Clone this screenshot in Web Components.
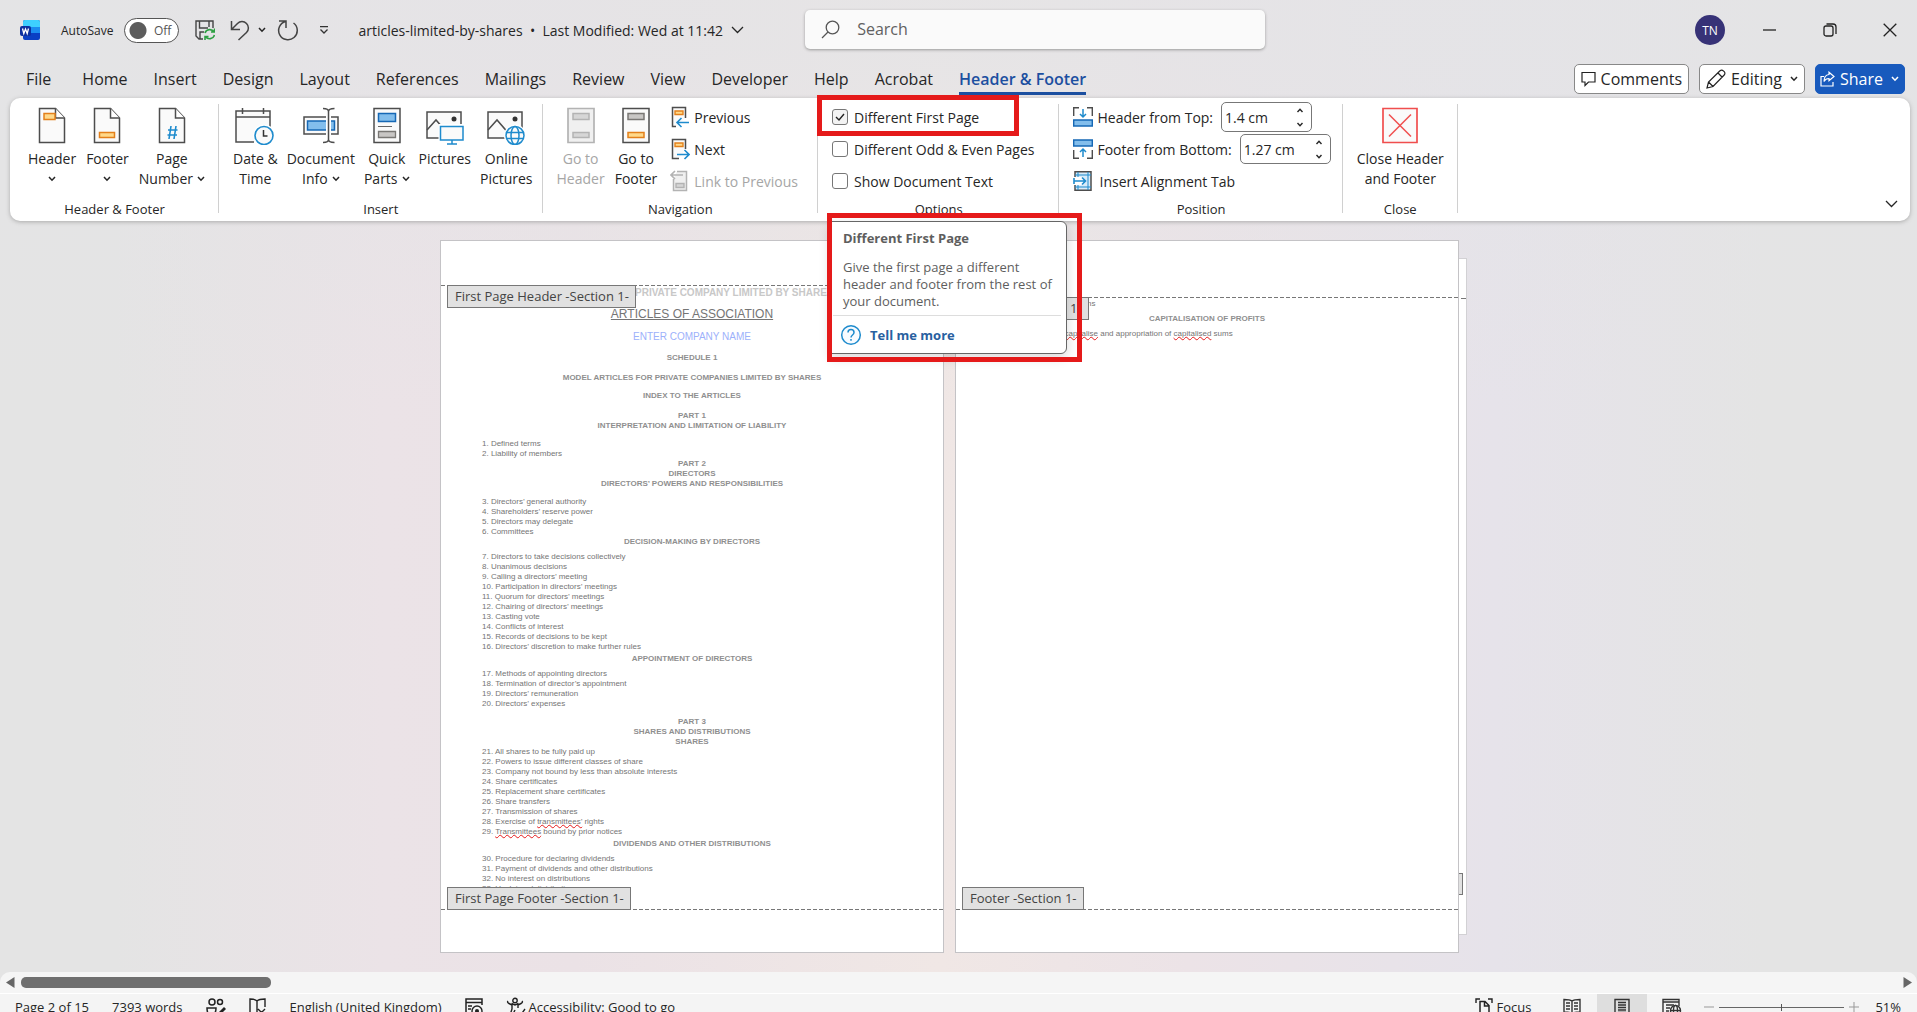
<!DOCTYPE html>
<html lang="en">
<head>
<meta charset="utf-8">
<title>articles-limited-by-shares</title>
<style>
    html, body { height: 100%; margin: 0; }
    body {
        font-family: "Open Sans", "Noto Sans", sans-serif;
        font-size: 14px;
        color: #262626;
        overflow: hidden;
        --blue: #185abd;
        --line: #d0d0d0;
        --red: #e51a1a;
    }
</style>
</head>
<body>
<word-app>
    <title-bar slot="title"></title-bar>
    <tab-strip slot="tabs"></tab-strip>
    <ribbon-bar slot="ribbon">
        <ribbon-group label="Header &amp; Footer" style="--pad: 0 10px 0 14px; --gap: 2px">
            <ribbon-button icon="header" label="Header|" drop></ribbon-button>
            <ribbon-button icon="footer" label="Footer|" drop></ribbon-button>
            <ribbon-button icon="number" label="Page|Number" drop></ribbon-button>
        </ribbon-group>
        <ribbon-group label="Insert" style="--pad: 0 6px 0 10px">
            <ribbon-button icon="date" label="Date &amp;|Time"></ribbon-button>
            <ribbon-button icon="info" label="Document|Info" drop></ribbon-button>
            <ribbon-button icon="parts" label="Quick|Parts" drop></ribbon-button>
            <ribbon-button icon="pictures" label="Pictures"></ribbon-button>
            <ribbon-button icon="online" label="Online|Pictures"></ribbon-button>
        </ribbon-group>
        <ribbon-group label="Navigation" style="--pad: 0 20px 0 10px; --gap: 2px">
            <ribbon-button icon="gotoHeader" label="Go to|Header" disabled></ribbon-button>
            <ribbon-button icon="gotoFooter" label="Go to|Footer"></ribbon-button>
            <ribbon-stack>
                <ribbon-command icon="previous" label="Previous"></ribbon-command>
                <ribbon-command icon="next" label="Next"></ribbon-command>
                <ribbon-command icon="link" label="Link to Previous" disabled></ribbon-command>
            </ribbon-stack>
        </ribbon-group>
        <ribbon-group label="Options" style="--pad: 0 25px 0 14px">
            <ribbon-stack>
                <ribbon-check label="Different First Page" checked></ribbon-check>
                <ribbon-check label="Different Odd &amp; Even Pages"></ribbon-check>
                <ribbon-check label="Show Document Text"></ribbon-check>
            </ribbon-stack>
            <feature-tip slot="over" heading="Different First Page">Give the first page a different<br>header and footer from the rest of<br>your document.</feature-tip>
            <highlight-frame slot="over" style="left: -1px; top: -3px; width: 202px; height: 41px"></highlight-frame>
            <highlight-frame slot="over" style="left: 9px; top: 115px; width: 255px; height: 149px"></highlight-frame>
        </ribbon-group>
        <ribbon-group label="Position" style="--pad: 0 12px 0 14px">
            <ribbon-stack>
                <ribbon-measure icon="fromTop" label="Header from Top:" value="1.4 cm"></ribbon-measure>
                <ribbon-measure icon="fromBottom" label="Footer from Bottom:" value="1.27 cm"></ribbon-measure>
                <ribbon-command icon="alignTab" label="Insert Alignment Tab"></ribbon-command>
            </ribbon-stack>
        </ribbon-group>
        <ribbon-group label="Close" style="--pad: 0 10px">
            <ribbon-button icon="close" label="Close Header|and Footer"></ribbon-button>
        </ribbon-group>
    </ribbon-bar>
    <doc-workspace slot="workspace">
        <doc-sheet header="First Page Header -Section 1-" footer="First Page Footer -Section 1-" headline="PRIVATE COMPANY LIMITED BY SHARES">
            <articles-index></articles-index>
        </doc-sheet>
        <doc-sheet class="second" header="Header -Section 1-" footer="Footer -Section 1-">
            <profits-index></profits-index>
        </doc-sheet>
        <sheet-edge></sheet-edge>
    </doc-workspace>
    <scroll-strip slot="scroll"></scroll-strip>
    <status-bar slot="status"></status-bar>
</word-app>

<script>
const ink = '#4d4d4d';
const blue = '#1e8bcd';
const page = `<path d="M1.5 1.500h16l9 9.500v24.500h-25z" fill="#fafafa" stroke="${ink}" stroke-width="1.500"/><path d="M17.500 1.500v9.500h9" fill="#fff" stroke="${ink}" stroke-width="1.500"/>`;
const picture = `<path d="M1 5h34v26H1z" fill="#fafafa" stroke="${ink}" stroke-width="1.500"/><path d="M1 23l9-10 13 15" fill="none" stroke="${ink}" stroke-width="1.500"/><circle cx="28" cy="12" r="2.500" fill="#333"/>`;

// name: [width, height, markup]
const ICONS = {
    word: [20, 20, `<rect x="3" width="17" height="20" rx="2" fill="#0a3fc4"/><path d="M3 7V2a2 2 0 0 1 2-2h13a2 2 0 0 1 2 2v5z" fill="#3ed0ff"/><path d="M7 7h13v6H7z" fill="#1b8cf0"/><rect y="6" width="11" height="10" rx="2" fill="#0b2f9f"/><path d="M2.500 8.500l1.300 5 1.700-4.500 1.700 4.500 1.300-5" fill="none" stroke="#fff" stroke-width="1.300"/>`],
    save: [20, 21, `<path d="M8 19H4l-3-3V1h17v7M4.500 1v7H13M14 1v6M5 19v-7h4" fill="none" stroke="#444" stroke-width="1.400"/><path d="M10 13a5 5 0 0 1 9-1M19.500 8.500V12H16M19.500 15a5 5 0 0 1-9 1.500M10 20v-3.500h3.500" fill="none" stroke="#2ea043" stroke-width="1.600"/>`],
    undo: [20, 21, `<path d="M1.500 1v8.500H10M2 9l5.500-5.500a6.300 6.300 0 0 1 9 0 6.300 6.300 0 0 1 0 9L8.500 20" fill="none" stroke="#444" stroke-width="1.500"/>`],
    redo: [22, 21, `<path d="M2 1h7v7M8.500 1.500a9.300 9.300 0 1 0 8 1.500" fill="none" stroke="#444" stroke-width="1.500"/>`],
    chevron: [8, 6, `<path d="M1 1l3 3.200L7 1" fill="none" stroke="currentColor" stroke-width="1.500"/>`],
    chevronUp: [8, 5, `<path d="M1.500 4L4 1.300 6.500 4" fill="none" stroke="currentColor" stroke-width="1.400"/>`],
    chevronSmall: [8, 5, `<path d="M1.500 1L4 3.700 6.500 1" fill="none" stroke="currentColor" stroke-width="1.400"/>`],
    chevronWide: [13, 8, `<path d="M1 1l5.500 5.500L12 1" fill="none" stroke="currentColor" stroke-width="1.300"/>`],
    customise: [10, 8, `<path d="M1 .7h8M1.500 3.500L5 7l3.500-3.500" fill="none" stroke="#333" stroke-width="1.300"/>`],
    search: [19, 19, `<circle cx="11.500" cy="7.500" r="6.300" fill="none" stroke="#555" stroke-width="1.300"/><path d="M7 12l-6 6" stroke="#555" stroke-width="1.300"/>`],
    minimise: [14, 14, `<path d="M0 7h13" stroke="#222" stroke-width="1.300"/>`],
    restore: [14, 14, `<rect x="1" y="3" width="9" height="10" rx="2" fill="none" stroke="#222" stroke-width="1.300"/><path d="M3.500 1H10a3 3 0 0 1 3 3v7" fill="none" stroke="#222" stroke-width="1.300"/>`],
    exit: [14, 14, `<path d="M.7.7l12.600 12.600M13.300.7L.7 13.300" stroke="#222" stroke-width="1.300"/>`],
    comment: [15, 16, `<path d="M1 1.500h13v9.500H7.500L4 14.500V11H1z" fill="none" stroke="#222" stroke-width="1.200"/>`],
    pencil: [20, 20, `<path d="M1 19l1.500-6L14 1.800a2.300 2.300 0 0 1 3.300 0l.9.9a2.300 2.300 0 0 1 0 3.300L7 17.500zM12 4l4 4M2.500 13L7 17.500" fill="none" stroke="#222" stroke-width="1.200"/>`],
    share: [15, 16, `<path d="M4 5.500H1V15h12v-4" fill="none" stroke="#fff" stroke-width="1.200"/><path d="M9 1.200l5 4.300-5 4.300V7.500C6.500 7.500 5 8.500 4 10.500c0-4 2-6.700 5-7z" fill="none" stroke="#fff" stroke-width="1.200"/>`],
    header: [28, 38, `${page}<path d="M6 6.500h11v6H6z" fill="#ffd98a" stroke="#e3801b" stroke-width="1.500"/>`],
    footer: [28, 38, `${page}<path d="M6.500 25.500h15v5h-15z" fill="#ffd98a" stroke="#e3801b" stroke-width="1.500"/>`],
    number: [28, 38, `${page}<path d="M13 19l-2 13M18 19l-2 13M10 23h9.500M9.500 28H19" fill="none" stroke="${blue}" stroke-width="1.600"/>`],
    date: [40, 38, `<path d="M1 4h34v31H1z" fill="#fafafa"/><path d="M19 35H1V4h34v17M1 10h34M7.500 1v6M28.500 1v6" fill="none" stroke="${ink}" stroke-width="1.500"/><circle cx="29" cy="28.500" r="11" fill="#fff"/><circle cx="29" cy="28.500" r="9" fill="#fafafa" stroke="${blue}" stroke-width="1.600"/><path d="M28.500 23v6h4" fill="none" stroke="#333" stroke-width="1.500"/>`],
    info: [36, 38, `<path d="M1 10h34v17H1z" fill="#fafafa" stroke="${ink}" stroke-width="1.500"/><path d="M4.500 14h27v9h-27z" fill="#83beec" stroke="#1668b5" stroke-width="1.500"/><path d="M25.500 1v35" stroke="#fff" stroke-width="5"/><path d="M20 1.500c3 0 5.500 1 5.500 3 0-2 2.500-3 6-3M20 35.500c3 0 5.500-1 5.500-3 0 2 2.500 3 6 3M25.500 4v30" fill="none" stroke="${ink}" stroke-width="1.500"/>`],
    parts: [28, 38, `<path d="M1 1.500h26v34H1z" fill="#fafafa" stroke="${ink}" stroke-width="1.500"/><path d="M5.500 6.500h17v8h-17z" fill="#83beec" stroke="#1668b5" stroke-width="1.500"/><path d="M5 19.500h14" stroke="#666"/><path d="M5.500 24.500h17v6h-17z" fill="#c8c6c4" stroke="#797774" stroke-width="1.300"/>`],
    pictures: [38, 38, `${picture}<path d="M12.500 17h26v18h-26z" fill="#fff"/><path d="M14.500 19.500h22.500V33H14.500zM26 33v3.500M21 37h10" fill="#fafafa" stroke="${blue}" stroke-width="1.500"/>`],
    online: [38, 38, `${picture}<circle cx="28" cy="28.500" r="11" fill="#fff"/><g fill="none" stroke="${blue}" stroke-width="1.500"><circle cx="28" cy="28.500" r="9" fill="#fafafa"/><ellipse cx="28" cy="28.500" rx="4" ry="9"/><path d="M20 25.500h16M20 31.500h16"/></g>`],
    gotoHeader: [28, 38, `<path d="M1 1.500h26v34H1z" fill="#f0f0f0" stroke="#b3b3b3" stroke-width="1.700"/><path d="M6 6.500h16v6H6zM6 25.500h16v5H6z" fill="#d6d6d6" stroke="#b3b3b3" stroke-width="1.500"/>`],
    gotoFooter: [28, 38, `<path d="M1 1.500h26v34H1z" fill="#fafafa" stroke="${ink}" stroke-width="1.500"/><path d="M6 6.500h16v6H6z" fill="#c8c6c4" stroke="#797774" stroke-width="1.500"/><path d="M6 25.500h16v5H6z" fill="#ffd98a" stroke="#e3801b" stroke-width="1.500"/>`],
    close: [36, 38, `<path d="M1 1.500h34v34H1z" fill="#fafafa" stroke="#f04e4e" stroke-width="1.700"/><path d="M7 7.500l22 22M29 7.500l-22 22" stroke="#f04e4e" stroke-width="1.500"/>`],
    previous: [20, 22, `<path d="M15.500 12V1.500h-13v19H6" fill="#fafafa" stroke="${ink}" stroke-width="1.500"/><path d="M5 5h8v3.500H5z" fill="#ffd98a" stroke="#e3801b" stroke-width="1.400"/><path d="M19 16.500H7M11.500 12L7 16.500l4.500 4.500" fill="none" stroke="${blue}" stroke-width="1.600"/>`],
    next: [20, 22, `<path d="M15.500 11V1.500h-13v19H9" fill="#fafafa" stroke="${ink}" stroke-width="1.500"/><path d="M5 5h8v3.500H5z" fill="#ffd98a" stroke="#e3801b" stroke-width="1.400"/><path d="M7 16.500h12M14.500 12l4.500 4.500-4.500 4.500" fill="none" stroke="${blue}" stroke-width="1.600"/>`],
    link: [20, 22, `<path d="M7 1.500h9.500v19h-13V9" fill="#f0f0f0" stroke="#b3b3b3" stroke-width="1.500"/><path d="M6 13.500h8v4H6z" fill="#d6d6d6" stroke="#b3b3b3" stroke-width="1.400"/><path d="M1 5h12M5 1L1 5l4 4" fill="none" stroke="#b3b3b3" stroke-width="1.600"/>`],
    fromTop: [20, 20, `<path d="M.7 9V.7H6M14 .7h5.300V9" fill="none" stroke="${ink}" stroke-width="1.400"/><path d="M.7 13h18.600v6H.7z" fill="#83beec" stroke="#1668b5" stroke-width="1.400"/><path d="M10 2v8M7 7l3 3 3-3" fill="none" stroke="${blue}" stroke-width="1.500"/>`],
    fromBottom: [20, 20, `<path d="M.7 11v8.300H6M14 19.300h5.300V11" fill="none" stroke="${ink}" stroke-width="1.400"/><path d="M.7 1h18.600v6H.7z" fill="#83beec" stroke="#1668b5" stroke-width="1.400"/><path d="M10 18v-8M7 13l3-3 3 3" fill="none" stroke="${blue}" stroke-width="1.500"/>`],
    alignTab: [20, 20, `<path d="M2 .7h16v18.600H2z" fill="#d8ecfa" stroke="${ink}" stroke-width="1.500"/><path d="M5 1v18M15 1v18M2 4h16M2 16h16" stroke="${blue}"/><path d="M0 6h10v8H0z" fill="#fff"/><path d="M1 10h11M9 6.500l3.500 3.500L9 13.500M1 7v6" fill="none" stroke="${blue}" stroke-width="1.600"/>`],
    help: [22, 22, `<circle cx="11" cy="11" r="9.300" fill="#f7fbff" stroke="${blue}" stroke-width="1.500"/><path d="M8 8.500c0-4 6-4 6 0 0 2.500-3 2.500-3 5M11 15v1.800" fill="none" stroke="${blue}" stroke-width="1.500"/>`],
    people: [20, 20, `<g fill="none" stroke="#222" stroke-width="1.500"><circle cx="6" cy="5" r="3"/><circle cx="14" cy="5" r="2.500"/><path d="M1 11h9c0 5-2 7-5 7s-4-3-4-7z"/></g><path d="M11 17l7-7 2 2-7 7h-2z" fill="#222"/>`],
    proof: [18, 20, `<path d="M8 17V4C6 2 4 2 1 2v15h5M8 4c2-2 4-2 8-2v8M9 12l7 7M16 12l-7 7" fill="none" stroke="#222" stroke-width="1.400"/>`],
    macro: [18, 20, `<path d="M6 17H1V2h16v6M1 5.500h16M3 9h4M3 12h3" fill="none" stroke="#222" stroke-width="1.500"/><circle cx="12" cy="14" r="5" fill="none" stroke="#222" stroke-width="1.400"/><circle cx="12" cy="14" r="2" fill="#222"/>`],
    access: [20, 20, `<circle cx="9" cy="3.500" r="2.200" fill="none" stroke="#222" stroke-width="1.400"/><path d="M2 4c-1 1 0 2 1 2.500L6 8v4l-2 6c0 1 2 1.500 2.500 0L9 13M16 4c1 1 0 2-1 2.500L12 8v3M5.500 6.500L9 8l3.500-1.500M11 16l3 3 5-7" fill="none" stroke="#222" stroke-width="1.400"/>`],
    focus: [18, 20, `<path d="M1 6V2h4M13 2h4v4M1 15v4h4M17 15v4h-4" fill="none" stroke="#222" stroke-width="1.400"/><path d="M5 4.500h5l4 4V18H5zM9.500 4.500V9H14" fill="none" stroke="#222" stroke-width="1.500"/>`],
    read: [18, 18, `<path d="M9 15.500V3c-2-1.500-5-1.500-8-1.500V14c3 0 6 0 8 1.500zM9 3c2-1.500 5-1.500 8-1.500V14c-3 0-6 0-8 1.500M3 5h4M3 8h4M3 11h4M11 5h4M11 8h4M11 11h4" fill="none" stroke="#333" stroke-width="1.400"/>`],
    print: [16, 18, `<path d="M1 1.500h14v15H1zM4 4.500h8M4 7h8M4 9.500h8M4 12h8M4 14.500h8" fill="none" stroke="#333" stroke-width="1.400"/>`],
    web: [20, 18, `<path d="M8 16.500H1v-15h16V8M1 4h16M4 7h8M4 10h4M4 13h3" fill="none" stroke="#333" stroke-width="1.400"/><g fill="#f4f4f4" stroke="#333" stroke-width="1.400"><circle cx="13.500" cy="12.500" r="5"/><ellipse cx="13.500" cy="12.500" rx="2" ry="5"/><path d="M8.500 12.500h10"/></g>`],
    minus: [12, 12, `<path d="M1 6h10" stroke="#999"/>`],
    plus: [12, 12, `<path d="M1 6h10M6 1v10" stroke="#999"/>`]
};

function icon(name) {
    const [w, h, markup] = ICONS[name];
    return `<svg width="${w}" height="${h}" viewBox="0 0 ${w} ${h}" aria-hidden="true">${markup}</svg>`;
}

const RESET = `
    * { box-sizing: border-box; }
    svg { display: block; flex: none; }
    button { border: 0; padding: 0; background: none; font: inherit; color: inherit; display: flex; align-items: center; justify-content: center; }
`;

class BaseElement extends HTMLElement {
    constructor() {
        super();
        this.attachShadow({ mode: 'open' });
    }

    connectedCallback() {
        this.shadowRoot.innerHTML = `<style>${RESET}${this.styles()}</style>${this.render()}`;
    }

    styles() { return ''; }
    render() { return '<slot></slot>'; }
    attr(name) { return (this.getAttribute(name) || '').replace(/&/g, '&amp;'); }
}

class WordApp extends BaseElement {
    styles() {
        return `
            :host {
                display: flex;
                flex-direction: column;
                height: 100vh;
                background:
                    linear-gradient(rgba(228, 228, 230, .8) 5%, rgba(228, 228, 230, 0) 40%),
                    linear-gradient(90deg, #e4e4e4 6%, #ebe3e7 20%, #ebe2e6 30%, #f0e7e5 49%, #ece3e7 62%, #e6e3ea 78%, #e4e4e4 92%);
            }
            slot[name="ribbon"]::slotted(*) { position: relative; z-index: 1; }
            slot[name="workspace"]::slotted(*) { flex: 1; min-height: 0; }
        `;
    }
    render() {
        return ['title', 'tabs', 'ribbon', 'workspace', 'scroll', 'status'].map(s => `<slot name="${s}"></slot>`).join('');
    }
}

class TitleBar extends BaseElement {
    styles() {
        return `
            :host { display: grid; grid-template-columns: 42fr 24fr 34fr; align-items: center; height: 60px; }
            .left, .right, .toggle, .search { display: flex; align-items: center; }
            .left { padding-left: 20px; }
            .toggle { margin: 0 16px 0 21px; gap: 11px; font-size: 12px; position: relative; }
            .toggle input { appearance: none; margin: 0; width: 55px; height: 25px; border: 1px solid #555; border-radius: 13px; background: radial-gradient(circle at 13px 50%, #5c5c5c 8px, #fff 9px); }
            .toggle span { position: absolute; right: 8px; color: #555; }
            .undo { margin-left: 15px; gap: 8px; }
            .redo { margin: 0 20px 0 11px; }
            .name { margin-left: 29px; gap: 8px; white-space: pre; }
            .search { height: 39px; margin-top: -1px; padding: 0 16px; gap: 17px; border-radius: 5px; background: #fafafa; box-shadow: 0 1px 3px #999; }
            .search input { flex: 1; border: 0; background: none; font: inherit; font-size: 16px; outline: 0; padding: 0 0 2px; }
            .search input::placeholder { color: #616161; }
            .right { justify-content: flex-end; gap: 6px; }
            .user { width: 30px; height: 30px; margin-right: 12px; border-radius: 50%; background: #373277; color: #fff; font-size: 12px; }
            .window { width: 54px; height: 40px; }
        `;
    }
    render() {
        return `
            <div class="left">
                ${icon('word')}
                <label class="toggle">AutoSave<input type="checkbox" role="switch"><span>Off</span></label>
                <button aria-label="Save">${icon('save')}</button>
                <button class="undo" aria-label="Undo">${icon('undo')}${icon('chevron')}</button>
                <button class="redo" aria-label="Redo">${icon('redo')}</button>
                <button aria-label="Customise toolbar">${icon('customise')}</button>
                <button class="name"><span>articles-limited-by-shares  •  Last Modified: Wed at 11:42</span>${icon('chevronWide')}</button>
            </div>
            <div class="search">${icon('search')}<input type="text" placeholder="Search" aria-label="Search"></div>
            <div class="right">
                <button class="user" aria-label="Account">TN</button>
                <button class="window" aria-label="Minimise">${icon('minimise')}</button>
                <button class="window" aria-label="Restore">${icon('restore')}</button>
                <button class="window" aria-label="Close">${icon('exit')}</button>
            </div>
        `;
    }
}

class TabStrip extends BaseElement {
    styles() {
        return `
            :host { display: flex; justify-content: space-between; height: 38px; padding: 0 12px 0 26px; font-size: 16px; }
            nav { display: flex; gap: 26px; }
            nav button { height: 35px; padding-top: 6px; border-bottom: 3px solid transparent; }
            nav button:first-child { margin-right: 5px; }
            nav .on { font-weight: 600; color: #1c4fa0; border-color: #1c4fa0; }
            .actions { display: flex; gap: 10px; padding-top: 4px; }
            .actions button { height: 30px; gap: 5px; padding: 0 6px; border: 1px solid #888; border-radius: 5px; background: #fff; }
            .actions .share { background: var(--blue); border-color: var(--blue); color: #fff; padding: 0 5px 0 4px; }
            .actions button svg:last-child:not(:first-child) { margin-left: 3px; }
        `;
    }
    render() {
        const tabs = ['File', 'Home', 'Insert', 'Design', 'Layout', 'References', 'Mailings', 'Review', 'View', 'Developer', 'Help', 'Acrobat'];
        return `
            <nav>
                ${tabs.map(t => `<button>${t}</button>`).join('')}
                <button class="on">Header &amp; Footer</button>
            </nav>
            <div class="actions">
                <button>${icon('comment')}Comments</button>
                <button>${icon('pencil')}Editing${icon('chevron')}</button>
                <button class="share">${icon('share')}Share${icon('chevron')}</button>
            </div>
        `;
    }
}

class RibbonBar extends BaseElement {
    styles() {
        return `
            :host { display: flex; height: 123px; margin: 0 7px 0 10px; border-radius: 10px; background: #fff; box-shadow: 0 1px 4px #aaa; }
            .collapse { align-self: flex-end; margin: 0 12px 13px auto; }
        `;
    }
    render() {
        return `<slot></slot><button class="collapse" aria-label="Collapse ribbon">${icon('chevronWide')}</button>`;
    }
}

class RibbonGroup extends BaseElement {
    styles() {
        return `
            :host { display: flex; flex-direction: column; position: relative; }
            :host::after { content: ""; position: absolute; right: 0; top: 6px; bottom: 8px; width: 1px; background: var(--line); }
            .body { display: flex; gap: var(--gap, 1px); height: 102px; padding: var(--pad, 0); }
            .label { text-align: center; font-size: 13px; line-height: 18px; }
        `;
    }
    render() {
        return `<div class="body"><slot></slot></div><div class="label">${this.attr('label')}</div><slot name="over"></slot>`;
    }
}

class RibbonButton extends BaseElement {
    styles() {
        return `
            :host { display: block; }
            button { flex-direction: column; justify-content: flex-start; padding: 9px 4px 0; line-height: 20px; }
            button:disabled { color: #a6a6a6; }
            svg { margin-bottom: 4px; }
            span { display: flex; align-items: center; gap: 4px; height: 20px; white-space: nowrap; }
            span svg { margin: 0; }
        `;
    }
    render() {
        const lines = this.attr('label').split('|');
        const drop = this.hasAttribute('drop') ? icon('chevron') : '';
        const text = lines.map((l, i) => `<span>${l}${i === lines.length - 1 ? drop : ''}</span>`).join('');
        return `<button ${this.hasAttribute('disabled') ? 'disabled' : ''}>${icon(this.getAttribute('icon'))}${text}</button>`;
    }
}

class RibbonStack extends BaseElement {
    styles() {
        return `:host { display: flex; flex-direction: column; padding: 3px 0 0; }`;
    }
}

class RibbonCommand extends BaseElement {
    styles() {
        return `
            :host { display: flex; height: 32px; }
            button { gap: 4px; padding-left: 7px; white-space: nowrap; }
            button:disabled { color: #a6a6a6; }
            :host([icon="alignTab"]) button { padding-left: 0; gap: 6px; }
        `;
    }
    render() {
        return `<button ${this.hasAttribute('disabled') ? 'disabled' : ''}>${icon(this.getAttribute('icon'))}${this.attr('label')}</button>`;
    }
}

class RibbonCheck extends BaseElement {
    styles() {
        return `
            :host { display: flex; height: 32px; }
            label { display: flex; align-items: center; gap: 6px; white-space: nowrap; }
            input { appearance: none; width: 16px; height: 16px; margin: 0; border: 1px solid #777; border-radius: 3px; background: #fff; }
            .box { display: grid; }
            .box > * { grid-area: 1 / 1; }
            svg { display: none; pointer-events: none; }
            input:checked { background: #f3f3f3; }
            input:checked + svg { display: block; }
        `;
    }
    render() {
        return `
            <label>
                <span class="box">
                    <input type="checkbox" ${this.hasAttribute('checked') ? 'checked' : ''}>
                    <svg width="16" height="16"><path d="M4 8l3 3 5-6" fill="none" stroke="#222" stroke-width="1.400"/></svg>
                </span>
                ${this.attr('label')}
            </label>
        `;
    }
}

class RibbonMeasure extends BaseElement {
    styles() {
        return `
            :host { display: flex; align-items: center; height: 32px; white-space: nowrap; }
            label { display: flex; align-items: center; gap: 4px; margin-right: 8px; }
            .field { display: flex; width: 91px; height: 30px; border: 1px solid #777; border-radius: 5px; background: #fff; }
            input { flex: 1; min-width: 0; border: 0; padding: 0 0 0 3px; background: none; font: inherit; color: inherit; outline: 0; }
            .spin { display: flex; flex-direction: column; width: 22px; }
            .spin button { flex: 1; }
        `;
    }
    render() {
        return `
            <label for="value">${icon(this.getAttribute('icon'))}${this.attr('label')}</label>
            <div class="field">
                <input id="value" type="text" value="${this.attr('value')}">
                <div class="spin">
                    <button aria-label="Increase">${icon('chevronUp')}</button>
                    <button aria-label="Decrease">${icon('chevronSmall')}</button>
                </div>
            </div>
        `;
    }
}

class FeatureTip extends BaseElement {
    styles() {
        return `
            :host { position: absolute; left: 12px; top: 123px; width: 235px; border: 1px solid #666; border-radius: 0 6px 6px 0; background: #fff; box-shadow: 0 4px 12px rgba(0, 0, 0, .15); font-size: 13px; color: #5e5e5e; }
            .text { padding: 7px 0 5px 12px; line-height: 17px; white-space: nowrap; }
            h2 { margin: 0 0 12px; font-size: 13px; line-height: 18px; }
            .more { display: flex; align-items: center; gap: 8px; height: 38px; margin: 0 5px 0 2px; padding: 0 7px; border-top: 1px solid #ddd; }
            a { color: #28609f; font-weight: 700; text-decoration: none; }
        `;
    }
    render() {
        return `<div class="text"><h2>${this.attr('heading')}</h2><slot></slot></div><div class="more">${icon('help')}<a href="#">Tell me more</a></div>`;
    }
}

class HighlightFrame extends BaseElement {
    styles() {
        return `:host { position: absolute; box-sizing: border-box; border: 5px solid var(--red); pointer-events: none; }`;
    }
    render() { return ''; }
}

class DocWorkspace extends BaseElement {
    styles() {
        return `:host { display: flex; justify-content: center; padding: 19px 10px 19px 0; box-sizing: border-box; }`;
    }
}

class DocSheet extends BaseElement {
    styles() {
        return `
            :host { display: flex; flex-direction: column; box-sizing: border-box; width: 504px; padding: 44px 0 42px; border: 1px solid #c4c3c6; background: #fff; font-family: "Liberation Sans", sans-serif; }
            :host(.second) { margin-left: 11px; padding-top: 56px; }
            .area { flex: 1; min-height: 0; position: relative; background: repeating-linear-gradient(90deg, #777 0 4px, transparent 4px 6px) top / 100% 1px no-repeat, repeating-linear-gradient(90deg, #777 0 4px, transparent 4px 6px) bottom / 100% 1px no-repeat; }
            .mark { position: absolute; left: 6px; height: 23px; padding: 0 6px 0 7px; border: 1px solid #777; background: #e1e1e1; font: 13px/20px "Open Sans", sans-serif; color: #444; white-space: nowrap; }
            .top { top: 0; }
            .bottom { bottom: 0; }
            .headline { padding: 2px 0 0 194px; height: 22px; font-size: 10px; line-height: 12px; font-weight: 700; color: #c8c8c8; white-space: nowrap; }
        `;
    }
    render() {
        const headline = this.hasAttribute('headline') ? `<div class="headline">${this.attr('headline')}</div>` : '';
        return `
            <div class="area">
                ${headline}
                <slot></slot>
                <div class="mark top">${this.attr('header')}</div>
                <div class="mark bottom">${this.attr('footer')}</div>
            </div>
        `;
    }
}

const DOC_STYLES = `
    :host { display: block; font-size: 8px; line-height: 10px; color: #757575; }
    h1, h2, h3, ol { margin: 0; padding: 0; list-style: none; }
    h1, h2, h3 { text-align: center; font-weight: 400; }
    h1 { font-size: 12px; line-height: 14px; text-decoration: underline; }
    h2 { margin: 10px 0; font-size: 10px; line-height: 12px; color: #9db1fb; }
    h3 { font-size: 8px; font-weight: 700; color: #8f8f8f; }
    ol { padding-left: 41px; white-space: nowrap; }
    i { font-style: normal; text-decoration: underline wavy #e51a1a 1px; text-underline-offset: 0; text-decoration-skip-ink: none; }
    .gap2 { margin-top: 2px; }
    .gap5 { margin-top: 5px; }
    .gap8 { margin-top: 8px; }
    .gap10 { margin-top: 10px; }
`;

// Each block: kind, space above, lines
const BLOCKS = [
    ['h3', '', ['SCHEDULE 1']],
    ['h3', 'gap10', ['MODEL ARTICLES FOR PRIVATE COMPANIES LIMITED BY SHARES']],
    ['h3', 'gap8', ['INDEX TO THE ARTICLES']],
    ['h3', 'gap10', ['PART 1', 'INTERPRETATION AND LIMITATION OF LIABILITY']],
    ['ol', 'gap8', ['1. Defined terms', '2. Liability of members']],
    ['h3', '', ['PART 2', 'DIRECTORS', 'DIRECTORS’ POWERS AND RESPONSIBILITIES']],
    ['ol', 'gap8', ['3. Directors’ general authority', '4. Shareholders’ reserve power', '5. Directors may delegate', '6. Committees']],
    ['h3', '', ['DECISION-MAKING BY DIRECTORS']],
    ['ol', 'gap5', ['7. Directors to take decisions collectively', '8. Unanimous decisions', '9. Calling a directors’ meeting', '10. Participation in directors’ meetings', '11. Quorum for directors’ meetings', '12. Chairing of directors’ meetings', '13. Casting vote', '14. Conflicts of interest', '15. Records of decisions to be kept', '16. Directors’ discretion to make further rules']],
    ['h3', 'gap2', ['APPOINTMENT OF DIRECTORS']],
    ['ol', 'gap5', ['17. Methods of appointing directors', '18. Termination of director’s appointment', '19. Directors’ remuneration', '20. Directors’ expenses']],
    ['h3', 'gap8', ['PART 3', 'SHARES AND DISTRIBUTIONS', 'SHARES']],
    ['ol', '', ['21. All shares to be fully paid up', '22. Powers to issue different classes of share', '23. Company not bound by less than absolute interests', '24. Share certificates', '25. Replacement share certificates', '26. Share transfers', '27. Transmission of shares', '28. Exercise of <i>transmittees’</i> rights', '29. <i>Transmittees</i> bound by prior notices']],
    ['h3', 'gap2', ['DIVIDENDS AND OTHER DISTRIBUTIONS']],
    ['ol', 'gap5', ['30. Procedure for declaring dividends', '31. Payment of dividends and other distributions', '32. No interest on distributions', '33. Unclaimed distributions']]
];

function block([kind, gap, lines]) {
    if (kind === 'ol') {
        return `<ol class="${gap}">${lines.map(l => `<li>${l}</li>`).join('')}</ol>`;
    }
    return `<h3 class="${gap}">${lines.join('<br>')}</h3>`;
}

class ArticlesIndex extends BaseElement {
    styles() { return DOC_STYLES; }
    render() {
        return `<h1>ARTICLES OF ASSOCIATION</h1><h2>ENTER COMPANY NAME</h2>${BLOCKS.map(block).join('')}`;
    }
}

class ProfitsIndex extends BaseElement {
    styles() {
        return `${DOC_STYLES}
            :host { padding-top: 2px; }
            ol { padding-left: 53px; }
            .rest { padding-left: 131px; }
        `;
    }
    render() {
        return `
            <div class="rest">ns</div>
            ${block(['h3', 'gap5', ['CAPITALISATION OF PROFITS']])}
            ${block(['ol', 'gap5', ['36. Authority to <i>capitalise</i> and appropriation of <i>capitalised</i> sums']])}
        `;
    }
}

// Right edge of the sheet stacked behind the second one
class SheetEdge extends BaseElement {
    styles() {
        return `
            :host { display: flex; flex-direction: column; justify-content: space-between; align-items: flex-start; box-sizing: border-box; width: 8px; margin: 18px 0; padding: 39px 0; border: 1px solid #d2d1d4; border-left: 0; background: #fff; }
            .dash { width: 5px; height: 1px; margin-left: 2px; background: #777; }
            .mark { width: 4px; height: 22px; border: 1px solid #777; border-left: 0; background: #e1e1e1; }
        `;
    }
    render() { return '<div class="dash"></div><div class="mark"></div>'; }
}

class ScrollStrip extends BaseElement {
    styles() {
        return `
            :host { display: flex; align-items: center; justify-content: space-between; height: 21px; padding: 0 5px 0 6px; background: #f5f5f5; border-radius: 10px 10px 0 0; }
            .track { flex: 1; padding: 0 6px; }
            .thumb { width: 13.3%; height: 11px; border-radius: 5px; background: #6f6f6f; }
        `;
    }
    render() {
        return `
            <button aria-label="Scroll left"><svg width="9" height="11"><path d="M8.500 0v11L0 5.500z" fill="#666"/></svg></button>
            <div class="track"><div class="thumb"></div></div>
            <button aria-label="Scroll right"><svg width="9" height="11"><path d="M.5 0v11L9 5.500z" fill="#666"/></svg></button>
        `;
    }
}

class StatusBar extends BaseElement {
    styles() {
        return `
            :host { display: flex; align-items: center; justify-content: space-between; box-sizing: border-box; height: 27px; margin-bottom: -8px; padding: 0 16px 0 15px; border-top: 1px solid #fff; background: #f4f4f4; font-size: 13px; white-space: nowrap; }
            div { display: flex; align-items: center; height: 100%; }
            .info { gap: 23px; }
            .info button, .focus { gap: 3px; }
            .focus { margin-right: 16px; }
            .view { width: 50px; height: 26px; }
            .on { background: #dedede; }
            input { appearance: none; width: 125px; height: 12px; margin: 0 4px; background: linear-gradient(#666, #666) center / 100% 1px no-repeat; }
            input::-webkit-slider-thumb { appearance: none; width: 1px; height: 7px; background: #555; }
            .percent { margin-left: 15px; }
            .out { margin-left: 6px; }
        `;
    }
    render() {
        return `
            <div class="info">
                <button>Page 2 of 15</button>
                <button>7393 words</button>
                <button aria-label="People">${icon('people')}</button>
                <button aria-label="Proofing">${icon('proof')}</button>
                <button>English (United Kingdom)</button>
                <button aria-label="Macros">${icon('macro')}</button>
                <button>${icon('access')}Accessibility: Good to go</button>
            </div>
            <div>
                <button class="focus">${icon('focus')}Focus</button>
                <button class="view" aria-label="Read mode">${icon('read')}</button>
                <button class="view on" aria-label="Print layout">${icon('print')}</button>
                <button class="view" aria-label="Web layout">${icon('web')}</button>
                <button class="out" aria-label="Zoom out">${icon('minus')}</button>
                <input type="range" min="0" max="100" value="50" aria-label="Zoom">
                <button aria-label="Zoom in">${icon('plus')}</button>
                <button class="percent">51%</button>
            </div>
        `;
    }
}

customElements.define('word-app', WordApp);
customElements.define('title-bar', TitleBar);
customElements.define('tab-strip', TabStrip);
customElements.define('ribbon-bar', RibbonBar);
customElements.define('ribbon-group', RibbonGroup);
customElements.define('ribbon-button', RibbonButton);
customElements.define('ribbon-stack', RibbonStack);
customElements.define('ribbon-command', RibbonCommand);
customElements.define('ribbon-check', RibbonCheck);
customElements.define('ribbon-measure', RibbonMeasure);
customElements.define('feature-tip', FeatureTip);
customElements.define('highlight-frame', HighlightFrame);
customElements.define('doc-workspace', DocWorkspace);
customElements.define('doc-sheet', DocSheet);
customElements.define('articles-index', ArticlesIndex);
customElements.define('profits-index', ProfitsIndex);
customElements.define('sheet-edge', SheetEdge);
customElements.define('scroll-strip', ScrollStrip);
customElements.define('status-bar', StatusBar);
</script>
</body>
</html>
